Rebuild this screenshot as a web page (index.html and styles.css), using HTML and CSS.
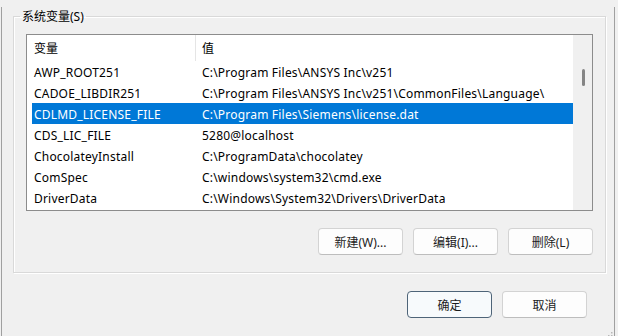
FILE: index.html
```html
<!DOCTYPE html>
<html lang="zh-CN">
<head>
    <meta charset="UTF-8">
    <title>环境变量</title>
    <link rel="stylesheet" href="styles.css">
</head>
<body>
    <div class="window">
        <fieldset class="group">
            <legend>系统变量(S)</legend>

            <div class="listbox">
                <div class="list">
                    <div class="list-head">
                        <span class="col-name">变量</span>
                        <span class="col-value">值</span>
                    </div>
                    <div class="row"><span class="col-name">AWP_ROOT251</span><span class="col-value">C:\Program Files\ANSYS Inc\v251</span></div>
                    <div class="row"><span class="col-name">CADOE_LIBDIR251</span><span class="col-value">C:\Program Files\ANSYS Inc\v251\CommonFiles\Language\</span></div>
                    <div class="row selected"><span class="col-name">CDLMD_LICENSE_FILE</span><span class="col-value">C:\Program Files\Siemens\license.dat</span></div>
                    <div class="row"><span class="col-name">CDS_LIC_FILE</span><span class="col-value">5280@localhost</span></div>
                    <div class="row"><span class="col-name">ChocolateyInstall</span><span class="col-value">C:\ProgramData\chocolatey</span></div>
                    <div class="row"><span class="col-name">ComSpec</span><span class="col-value">C:\windows\system32\cmd.exe</span></div>
                    <div class="row"><span class="col-name">DriverData</span><span class="col-value">C:\Windows\System32\Drivers\DriverData</span></div>
                </div>
                <div class="scrollbar">
                    <div class="thumb"></div>
                </div>
            </div>

            <div class="actions">
                <button>新建(W)...</button>
                <button>编辑(I)...</button>
                <button>删除(L)</button>
            </div>
        </fieldset>

        <div class="footer">
            <button class="default">确定</button>
            <button>取消</button>
        </div>

        <!-- size grip -->
        <svg class="grip" width="8" height="8" viewBox="0 0 8 8">
            <rect x="6" y="0" width="1.5" height="1.5" fill="#b8b8b8"/>
            <rect x="3" y="3" width="1.5" height="1.5" fill="#b8b8b8"/>
            <rect x="6" y="3" width="1.5" height="1.5" fill="#b8b8b8"/>
            <rect x="0" y="6" width="1.5" height="1.5" fill="#b8b8b8"/>
            <rect x="3" y="6" width="1.5" height="1.5" fill="#b8b8b8"/>
            <rect x="6" y="6" width="1.5" height="1.5" fill="#b8b8b8"/>
        </svg>
    </div>
</body>
</html>
```

FILE: styles.css
```css
* {
    box-sizing: border-box;
}

body {
    margin: 0;
    background: #f0f0f0;
    font-family: "Noto Sans", "Noto Sans CJK SC", sans-serif;
    font-size: 12px;
    color: #000;
}

.window {
    position: relative;
    width: 614px;
    height: 335px;
    margin-left: 1px;
    border: 1px solid #a0a0a0;
    border-top: none;
    background: #f0f0f0;
}

/* group box */
.group {
    width: 593px;
    margin: 7px 0 0 11px;
    padding: 9px 12px 17px;
    border: 1px solid #d9d9d9;
    box-shadow: inset 1px 1px 0 #fff, 1px 1px 0 #fff;
    min-width: 0;
}

.group legend {
    margin-left: -6px;
    padding: 0 2px;
    height: 18px;
    line-height: 20px;
    color: #000;
}

/* list view */
.listbox {
    display: flex;
    height: 177px;
    border: 1px solid #8c8c8c;
    background: #fff;
}

.list {
    flex: 1;
}

.list-head {
    display: flex;
    height: 26px;
    line-height: 28px;
}

.list-head .col-name {
    width: 169px;
    padding-left: 7px;
    border-right: 1px solid #e5e5e5;
}

.list-head .col-value {
    padding-left: 6px;
}

.row {
    display: flex;
    height: 21px;
    line-height: 23px;
    margin-left: 5px;
    white-space: nowrap;
    letter-spacing: 0.2px;
}

.row .col-name {
    width: 165px;
    padding-left: 2px;
}

.row .col-value {
    padding-left: 5px;
}

.row.selected {
    background: #0078d7;
    color: #fff;
}

.scrollbar {
    width: 19px;
    background: #f0f0f0;
    display: flex;
    justify-content: center;
    padding-left: 1px;
}

.thumb {
    width: 3px;
    height: 17px;
    margin-top: 34px;
    border-radius: 2px;
    background: #858585;
}

/* buttons */
.actions,
.footer {
    display: flex;
    justify-content: flex-end;
    gap: 10px;
}

.actions {
    margin-top: 17px;
}

.footer {
    margin-top: 18px;
    padding-right: 27px;
}

button {
    width: 85px;
    height: 27px;
    padding: 0;
    font-family: inherit;
    font-size: 12px;
    color: #1b1b1b;
    background: #fdfdfd;
    border: 1px solid #d3d3d3;
    border-bottom-color: #bdbdbd;
    border-radius: 4px;
}

button.default {
    border: 1px solid #4e6478;
    background: #f7fafc;
}

.grip {
    position: absolute;
    right: 1px;
    bottom: 1px;
}
```
